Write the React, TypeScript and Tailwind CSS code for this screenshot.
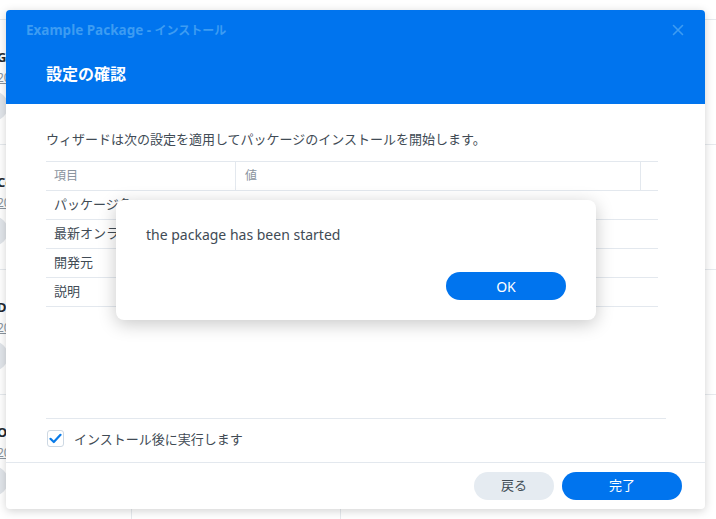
import React from "react";

const font = { fontFamily: '"Noto Sans", "Noto Sans CJK JP", sans-serif' };

function BgRow({ name, last }: { name: string; last?: boolean }) {
  return (
    <div className="relative h-[125px] border-b border-[#e6eaee] flex">
      <div className="w-[134px] shrink-0 flex flex-col -ml-[3px] pt-[28px]">
        <div className="text-[13px] leading-[18px] font-bold text-[#232a31]">{name}</div>
        <div className="mt-[3px] text-[12px] leading-[18px] text-[#8a949e] underline">2023-01-01</div>
        <div className="mt-[4px] -ml-[21px] w-[32px] h-[30px] rounded-full bg-[#e1e5ea]" />
      </div>
      {last && (
        <>
          <div className="w-[209px] shrink-0 border-l border-[#e6eaee]" />
          <div className="flex-1 border-l border-[#e6eaee]" />
        </>
      )}
    </div>
  );
}

export default function App() {
  const rows = ["パッケージ名", "最新オンライン バージョン", "開発元", "説明"];
  return (
    <div className="relative w-[716px] h-[519px] overflow-hidden bg-white" style={font}>
      {/* background list */}
      <div className="flex flex-col">
        <div className="h-[20px] border-b border-[#e6eaee]" />
        <BgRow name="GitLab" />
        <BgRow name="Container" />
        <BgRow name="Docker" />
        <BgRow name="OAuth" last />
      </div>

      {/* main dialog window */}
      <div className="absolute left-[6px] top-[10px] w-[699px] h-[499px] bg-white rounded-[4px] shadow-[0_2px_10px_rgba(0,0,0,0.18)] flex flex-col overflow-hidden">
        <div className="h-[94px] bg-[#0074ee] flex flex-col px-[20px]">
          <div className="flex items-center justify-between h-[40px]">
            <div className="text-[12px] font-bold text-[#3d9cf2] leading-[16px]">
              <span className="text-[13.5px]">Example Package - </span>インストール
            </div>
            <svg width="12" height="12" viewBox="0 0 12 12" className="mr-[1px]">
              <path d="M1.5 1.5 L10.5 10.5 M10.5 1.5 L1.5 10.5" stroke="#3d9cf2" strokeWidth="1.6" strokeLinecap="round" />
            </svg>
          </div>
          <div className="pl-[20px] mt-[13px] text-[16px] font-bold text-white leading-[22px]">設定の確認</div>
        </div>

        <div className="flex-1 flex flex-col pl-[40px] pr-[39px]">
          <div className="pt-[26px] text-[13px] leading-[18px] text-[#414b55] whitespace-nowrap">
            ウィザードは次の設定を適用してパッケージのインストールを開始します。
          </div>
          <div className="mt-[13px] w-[612px] border-t border-[#e3e8ee] text-[13px] text-[#414b55]">
            <div className="flex h-[29px] border-b border-[#e3e8ee]">
              <div className="w-[190px] border-r border-[#e3e8ee] flex items-center pl-[8px] text-[12px] text-[#8a949e]">項目</div>
              <div className="w-[405px] border-r border-[#e3e8ee] flex items-center pl-[9px] text-[12px] text-[#8a949e]">値</div>
              <div className="flex-1" />
            </div>
            {rows.map((k) => (
              <div key={k} className="flex h-[29px] border-b border-[#e3e8ee]">
                <div className="w-[190px] flex items-center pl-[8px] whitespace-nowrap overflow-hidden">{k}</div>
                <div className="flex-1" />
              </div>
            ))}
          </div>
          <div className="flex-1" />
          <div className="border-t border-[#e3e8ee] h-[44px] pb-[4px] flex items-center">
            <div className="ml-[1px] w-[17px] h-[17px] rounded-[3px] border border-[#cdd8e3] flex items-center justify-center bg-white">
              <svg width="13" height="11" viewBox="0 0 13 11">
                <path d="M1.5 5.8 L4.8 9 L11.5 1.8" stroke="#0a7be8" strokeWidth="2.2" fill="none" strokeLinecap="round" strokeLinejoin="round" />
              </svg>
            </div>
            <div className="ml-[10px] text-[13px] leading-[18px] text-[#414b55]">インストール後に実行します</div>
          </div>
        </div>

        <div className="border-t border-[#e3e8ee] h-[47px] flex items-start justify-end gap-[8px] pr-[23px] pt-[9px]">
          <button className="w-[80px] h-[28px] rounded-full bg-[#e5ebf1] text-[13px] text-[#414b55]">戻る</button>
          <button className="w-[120px] h-[28px] rounded-full bg-[#0074ee] text-[13px] text-white">完了</button>
        </div>
      </div>

      {/* alert */}
      <div className="absolute left-[116px] top-[200px] w-[480px] h-[120px] bg-white rounded-[8px] shadow-[0_4px_18px_rgba(0,0,0,0.22)] flex flex-col px-[30px]">
        <div className="pt-[26px] text-[14px] leading-[18px] text-[#414b55]">the package has been started</div>
        <div className="flex-1" />
        <div className="flex justify-end pb-[20px]">
          <button className="w-[120px] h-[28px] rounded-full bg-[#0074ee] text-[14px] text-white">OK</button>
        </div>
      </div>
    </div>
  );
}
